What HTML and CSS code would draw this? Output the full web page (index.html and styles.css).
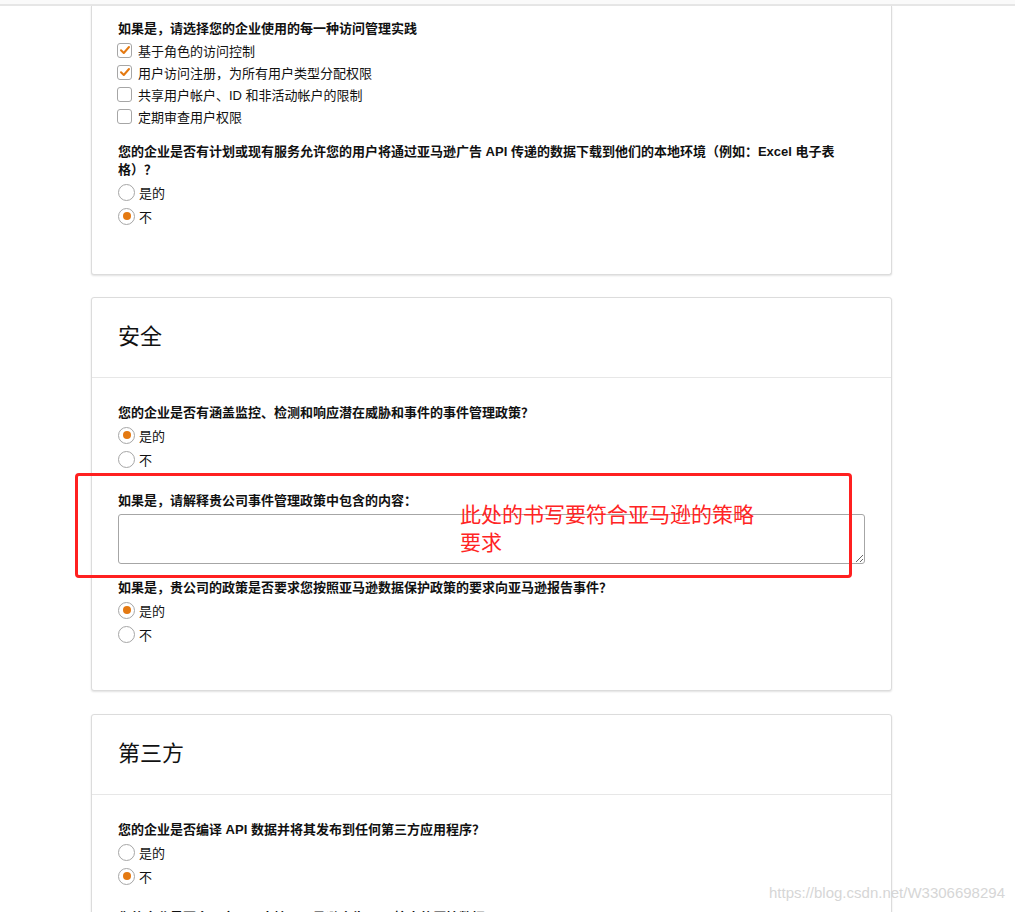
FILE: index.html
```html
<!DOCTYPE html>
<html lang="zh-CN">
<head>
    <meta charset="UTF-8" />
    <meta name="viewport" content="width=device-width, initial-scale=1.0" />
    <title>数据保护政策问卷</title>
    <link rel="stylesheet" href="styles.css">
</head>
<body>
    <div class="topbar"></div>

    <div class="page">
        <div class="card card-cut">
            <div class="card-body">
                <div class="field checks">
                    <p class="question">如果是，请选择您的企业使用的每一种访问管理实践</p>
                    <label class="check checked"><span class="box"><svg width="12" height="12" viewBox="0 0 12 12"><path d="M2 6.2 L4.8 9 L10 3" fill="none" stroke="#e47911" stroke-width="2" stroke-linecap="round" stroke-linejoin="round"/></svg></span>基于角色的访问控制</label>
                    <label class="check checked"><span class="box"><svg width="12" height="12" viewBox="0 0 12 12"><path d="M2 6.2 L4.8 9 L10 3" fill="none" stroke="#e47911" stroke-width="2" stroke-linecap="round" stroke-linejoin="round"/></svg></span>用户访问注册，为所有用户类型分配权限</label>
                    <label class="check"><span class="box"></span>共享用户帐户、ID 和非活动帐户的限制</label>
                    <label class="check"><span class="box"></span>定期审查用户权限</label>
                </div>
                <div class="field radios">
                    <p class="question">您的企业是否有计划或现有服务允许您的用户将通过亚马逊广告 API 传递的数据下载到他们的本地环境（例如：Excel 电子表格）？</p>
                    <label class="radio"><span class="dot"></span>是的</label>
                    <label class="radio on"><span class="dot"></span>不</label>
                </div>
            </div>
        </div>

        <div class="card">
            <div class="card-head">安全</div>
            <div class="card-body">
                <div class="field radios">
                    <p class="question">您的企业是否有涵盖监控、检测和响应潜在威胁和事件的事件管理政策？</p>
                    <label class="radio on"><span class="dot"></span>是的</label>
                    <label class="radio"><span class="dot"></span>不</label>
                </div>
                <div class="field text">
                    <p class="question">如果是，请解释贵公司事件管理政策中包含的内容：</p>
                    <textarea class="answer"></textarea>
                </div>
                <div class="field radios">
                    <p class="question">如果是，贵公司的政策是否要求您按照亚马逊数据保护政策的要求向亚马逊报告事件？</p>
                    <label class="radio on"><span class="dot"></span>是的</label>
                    <label class="radio"><span class="dot"></span>不</label>
                </div>
            </div>
        </div>

        <div class="card">
            <div class="card-head">第三方</div>
            <div class="card-body">
                <div class="field radios">
                    <p class="question">您的企业是否编译 API 数据并将其发布到任何第三方应用程序？</p>
                    <label class="radio"><span class="dot"></span>是的</label>
                    <label class="radio on"><span class="dot"></span>不</label>
                </div>
                <div class="field radios">
                    <p class="question">您的企业是否向用户公开直接从亚马逊广告 API 检索的原始数据？</p>
                    <label class="radio"><span class="dot"></span>是的</label>
                    <label class="radio"><span class="dot"></span>不</label>
                </div>
            </div>
        </div>

        <div class="note"><span>此处的书写要符合亚马逊的策略要求</span></div>
    </div>

    <div class="watermark">https://blog.csdn.net/W3306698294</div>
</body>
</html>
```

FILE: styles.css
```css
body {
    font-family: "Liberation Sans", "Noto Sans CJK SC", sans-serif;
    font-size: 13px;
    color: #111;
    background: #fff;
    margin: 0;
    height: 912px;
    overflow: hidden;
}
.topbar {
    height: 4px;
    background: #fafafa;
    border-bottom: 2px solid #e6e6e6;
}
.page {
    position: relative;
    padding-left: 91px;
}
.card {
    width: 801px;
    box-sizing: border-box;
    border: 1px solid #dcdcdc;
    border-radius: 3px;
    box-shadow: 0 1px 2px rgba(0, 0, 0, 0.12);
    margin-bottom: 23px;
    background: #fff;
}
.card-cut {
    border-top: none;
    border-radius: 0 0 3px 3px;
    margin-bottom: 22px;
}
.card-cut .card-body {
    padding-top: 14px;
    padding-bottom: 46px;
}
.card-head {
    padding: 24px 26px 25px;
    font-size: 22px;
    line-height: 30px;
    border-bottom: 1px solid #e7e7e7;
}
.card-body {
    padding: 26px 26px 44px;
}
.question {
    margin: 0 0 1px;
    font-weight: bold;
    line-height: 18px;
}
.checks {
    margin-bottom: 16px;
}
.radios {
    margin-bottom: 21px;
}
.text {
    margin-bottom: 15px;
}
.field:last-child {
    margin-bottom: 0;
}
.check {
    display: flex;
    align-items: center;
    height: 22px;
    margin-left: -1px;
}
.check .box {
    width: 15px;
    height: 15px;
    box-sizing: border-box;
    border: 1px solid #a6a6a6;
    border-radius: 3px;
    margin-right: 6px;
    display: flex;
    align-items: center;
    justify-content: center;
}
.radio {
    display: flex;
    align-items: center;
    height: 24px;
}
.radio .dot {
    width: 17px;
    height: 17px;
    box-sizing: border-box;
    border: 1px solid #a6a6a6;
    border-radius: 50%;
    margin-right: 4px;
    display: flex;
    align-items: center;
    justify-content: center;
}
.radio.on .dot::after {
    content: "";
    width: 8px;
    height: 8px;
    border-radius: 50%;
    background: #e47911;
}
.answer {
    display: block;
    width: 100%;
    height: 50px;
    box-sizing: border-box;
    margin-top: 4px;
    border: 1px solid #a6a6a6;
    border-radius: 3px;
    font-family: inherit;
}
.note {
    position: absolute;
    left: 75px;
    top: 467px;
    width: 777px;
    height: 105px;
    box-sizing: border-box;
    border: 3px solid #ff2020;
    border-radius: 4px;
    padding: 23px 0 0 382px;
    color: #ff2424;
    font-family: "Noto Sans CJK SC", sans-serif;
    font-size: 21px;
    line-height: 28px;
}
.note span {
    display: block;
    width: 310px;
}
.watermark {
    position: absolute;
    right: 10px;
    top: 884px;
    font-size: 15px;
    line-height: 18px;
    color: #d6d6d6;
}
```
